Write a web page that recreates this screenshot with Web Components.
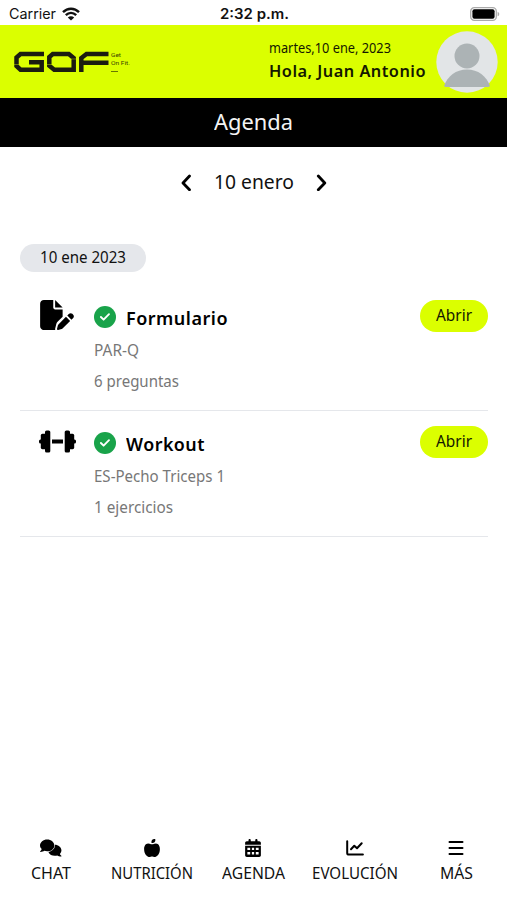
<!DOCTYPE html>
<html lang="es">
<head>
<meta charset="utf-8">
<title>Agenda</title>
<style>
body{
  margin:0;
  background:#fff;
  color:#111;
  font-family:"Noto Sans","Open Sans",sans-serif;
}
</style>
</head>
<body>
<gof-app>
  <status-bar></status-bar>
  <app-header date="martes,10 ene, 2023" name="Hola, Juan Antonio"></app-header>
  <page-title><fit-text style="width:79px">Agenda</fit-text></page-title>
  <day-picker><fit-text style="width:80px">10 enero</fit-text></day-picker>
  <date-chip><fit-text style="width:86px">10 ene 2023</fit-text></date-chip>
  <agenda-item icon="file">
    <fit-text slot="title" style="width:102px">Formulario</fit-text>
    <fit-text slot="name" style="width:45px">PAR-Q</fit-text>
    <fit-text slot="count" style="width:85px">6 preguntas</fit-text>
  </agenda-item>
  <agenda-item icon="dumbbell">
    <fit-text slot="title" style="width:79px">Workout</fit-text>
    <fit-text slot="name" style="width:131px">ES-Pecho Triceps 1</fit-text>
    <fit-text slot="count" style="width:79px">1 ejercicios</fit-text>
  </agenda-item>
  <tab-bar slot="footer">
    <tab-item icon="chat"><fit-text style="width:40px">CHAT</fit-text></tab-item>
    <tab-item icon="apple"><fit-text style="width:82px">NUTRICIÓN</fit-text></tab-item>
    <tab-item icon="calendar"><fit-text style="width:63px">AGENDA</fit-text></tab-item>
    <tab-item icon="chart"><fit-text style="width:86px">EVOLUCIÓN</fit-text></tab-item>
    <tab-item icon="bars"><fit-text style="width:33px">MÁS</fit-text></tab-item>
  </tab-bar>
</gof-app>

<script>
const icons = {
  wifi: `<svg width="18" height="14" viewBox="0 0 18 14" fill="none" stroke="#111" stroke-width="2.4">
    <path d="M1 5.2C5.6.6 12.4.6 17 5.2M3.8 8.2c3.1-3 7.3-3 10.4 0"/><path d="M9 13.6 5.8 10.4c1.8-1.6 4.6-1.6 6.4 0z" fill="#111" stroke="none"/></svg>`,
  battery: `<svg width="30" height="14" viewBox="0 0 30 14">
    <rect x=".7" y=".7" width="25.6" height="12.6" rx="3.6" fill="#fff" stroke="#aaa" stroke-width="1.3"/>
    <rect x="2.4" y="2.3" width="22.2" height="9.4" rx="2" fill="#000"/><path d="M27.6 4.7c2.2.8 2.2 3.8 0 4.6z" fill="#aaa"/></svg>`,
  logo: `<svg width="95" height="22" viewBox="0 0 95 22" fill="none" stroke="#1b1c10" stroke-width="4.5">
    <path d="M30 3H6.500L2.500 6.500v8.500l4 3.700h21.200v-7.500H15"/>
    <path d="M38.800 3h16l4.900 4v11.700H40.200l-4.900-4V6z"/>
    <path d="M94.500 3H72.500l-5.200 4v14M67 11.700h27.500"/>
    <path d="M0 13.500h5M33 13.500h5M57 8h5" stroke="#dbff00" stroke-width=".4"/></svg>`,
  left: `<svg width="12" height="18" viewBox="0 0 12 18" fill="none" stroke="#000" stroke-width="2.8" stroke-linecap="round" stroke-linejoin="round"><path d="M9.500 3 3 10l6.500 6.800"/></svg>`,
  right: `<svg width="12" height="18" viewBox="0 0 12 18" fill="none" stroke="#000" stroke-width="2.8" stroke-linecap="round" stroke-linejoin="round"><path d="M2.300 3 8.800 10l-6.500 6.800"/></svg>`,
  check: `<svg width="22" height="22" viewBox="0 0 22 22"><circle cx="11" cy="11" r="11" fill="#19a34a"/><path d="m6.900 11 2.700 2.700 5.400-5.500" fill="none" stroke="#fff" stroke-width="1.900" stroke-linecap="round" stroke-linejoin="round"/></svg>`,
  file: `<svg width="34" height="30" viewBox="0 0 576 512"><path d="M0 64C0 28.700 28.700 0 64 0H224V128c0 17.700 14.300 32 32 32H384V285.700l-86.800 86.800c-10.300 10.300-17.500 23.100-21 37.200l-18.700 74.900c-2.300 9.200-1.800 18.800 1.300 27.500H64c-35.300 0-64-28.700-64-64V64zM384 128H256V0L384 128zM549.800 235.700l14.400 14.400c15.600 15.600 15.600 40.900 0 56.600l-29.400 29.400-71-71 29.400-29.400c15.600-15.600 40.900-15.600 56.600 0zM311.900 417 441.100 287.800l71 71L382.900 487.900c-4.100 4.100-9.200 7-14.900 8.400l-60.100 15c-5.500 1.400-11.200-.2-15.200-4.200s-5.600-9.700-4.200-15.200l15-60.100c1.400-5.600 4.300-10.800 8.400-14.900z"/></svg>`,
  dumbbell: `<svg width="37" height="23" viewBox="0 0 37 23"><rect x="6" y="0.500" width="5.300" height="22" rx="1.600"/><rect x="1.800" y="3.800" width="7" height="15.400" rx="1.600"/><rect x="0" y="9.500" width="4" height="4" rx="1.500"/><rect x="13" y="9.500" width="11" height="4"/><rect x="25.700" y="0.500" width="5.300" height="22" rx="1.600"/><rect x="28.200" y="3.800" width="7" height="15.400" rx="1.600"/><rect x="33" y="9.500" width="4" height="4" rx="1.500"/></svg>`,
  chat: `<svg width="22" height="18" viewBox="0 0 23 18"><path d="M15.400 5.500c3.900 0 7 2.600 7 5.900 0 1.500-.6 2.800-1.600 3.800.3.900.9 1.500 1.500 2 .3.300.1.800-.3.800-1.500 0-2.900-.5-3.900-1.200-.8.300-1.700.4-2.700.4-2.900 0-5.400-1.400-6.500-3.500z"/><path d="M7.500 0C11.700 0 15 2.800 15 6.300s-3.300 6.200-7.500 6.200c-1 0-2-.2-2.900-.5-1 .7-2.400 1.200-4 1.200-.4 0-.6-.5-.3-.8.600-.6 1.200-1.400 1.500-2.300C.700 9.100 0 7.700 0 6.300 0 2.800 3.400 0 7.500 0z" stroke="#fff" stroke-width="1.200" paint-order="stroke"/></svg>`,
  apple: `<svg width="16" height="18" viewBox="0 0 448 512"><path d="M224 112c-8.800 0-16-7.200-16-16V80c0-44.200 35.800-80 80-80h16c8.800 0 16 7.200 16 16v16c0 44.200-35.800 80-80 80h-16zM0 288c0-76.300 35.700-160 112-160 27.300 0 59.700 10.300 82.700 19.300 18.800 7.300 39.900 7.300 58.700 0 22.900-8.900 55.400-19.300 82.700-19.300 76.300 0 112 83.700 112 160 0 128-80 224-160 224-16.500 0-38.100-6.600-51.500-11.300-8.100-2.800-16.900-2.800-25 0C198.100 505.400 176.500 512 160 512 80 512 0 416 0 288z"/></svg>`,
  calendar: `<svg width="16" height="18" viewBox="0 0 448 512"><path fill-rule="evenodd" d="M128 0c17.700 0 32 14.300 32 32v32h128V32c0-17.700 14.300-32 32-32s32 14.300 32 32v32h48c26.500 0 48 21.500 48 48v48H0v-48c0-26.500 21.500-48 48-48h48V32c0-17.700 14.300-32 32-32zM0 192h448v272c0 26.500-21.500 48-48 48H48c-26.500 0-48-21.500-48-48V192zm64 56v64h80v-64H64zm128 0v64h64v-64h-64zm112 0v64h80v-64h-80zM64 368v72h80v-72H64zm128 0v72h64v-72h-64zm112 0v72h80v-72h-80z"/></svg>`,
  chart: `<svg width="18" height="18" viewBox="0 0 18 18" fill="none" stroke="#000" stroke-width="2" stroke-linecap="round" stroke-linejoin="round"><path d="M1.200 2.200v11.700c0 1 .7 1.700 1.700 1.700h14M5 10.200l3.300-3.500 2.700 2.500 4.700-5"/></svg>`,
  bars: `<svg width="16" height="18" viewBox="0 0 16 18" stroke="#000" stroke-width="2" stroke-linecap="round"><path d="M1.500 3h13M1.500 9h13M1.500 15h13"/></svg>`,
};

// registers an element whose shadow root is built from the given markup
function component(tag, markup) {
  customElements.define(tag, class extends HTMLElement {
    constructor() {
      super();
      this.attachShadow({ mode: "open" });
      const template = document.createElement("template");
      template.innerHTML = typeof markup === "function" ? markup(this) : markup;
      this.shadowRoot.appendChild(template.content.cloneNode(true));
    }
  });
}

component("gof-app", `
<style>
:host{ display:flex; flex-direction:column; height:900px; overflow:hidden; }
main{ flex:1; }
</style>
<main><slot></slot></main>
<slot name="footer"></slot>`);

component("status-bar", `
<style>
:host{
  display:grid; grid-template-columns:1fr auto 1fr; align-items:center;
  height:25px; padding:2px 7px 0 9px; box-sizing:border-box;
  font-family:Inter,sans-serif; font-size:14px; line-height:22px;
}
.left{ display:flex; align-items:center; gap:6px; }
.time{ font-weight:600; }
.battery{ justify-self:end; display:flex; }
svg{ display:block; }
</style>
<div class="left"><fit-text style="width:47px">Carrier</fit-text>${icons.wifi}</div>
<fit-text class="time" style="width:69px">2:32 p.m.</fit-text>
<div class="battery">${icons.battery}</div>`);

component("app-header", (el) => `
<style>
:host{
  display:flex; align-items:center; justify-content:space-between;
  height:73px; padding:0 9px 0 14px; box-sizing:border-box; background:#dbff00;
}
.logo{ display:flex; gap:2px; align-items:flex-start; }
.logo svg{ display:block; }
.tag{ font:6px/8px Roboto,sans-serif; color:#3c4400; }
.tag fit-text{ display:block; }
.line{ width:7px; height:1px; margin-top:4px; background:#687600; }
.user{ display:flex; align-items:center; gap:10px; color:#141800; }
.date{ font-size:14px; line-height:22px; }
.name{ font-size:16.5px; font-weight:600; line-height:23px; letter-spacing:.5px; }
.text{ display:flex; flex-direction:column; margin-top:-4px; }
.user svg{ display:block; }
</style>
<div class="logo">${icons.logo}<div class="tag"><fit-text style="width:10px">Get</fit-text><fit-text style="width:19px">On Fit.</fit-text><div class="line"></div></div></div>
<div class="user">
  <div class="text">
    <fit-text class="date" style="width:122px">${el.getAttribute("date")}</fit-text>
    <fit-text class="name" style="width:157px">${el.getAttribute("name")}</fit-text>
  </div>
  <svg width="62" height="62" viewBox="0 0 62 62">
    <circle cx="31" cy="31" r="30.700" fill="#e2e5e7"/>
    <circle cx="31" cy="25" r="12.500" fill="#acb3b5"/>
    <path d="M8 55c3.500-10 12-16.500 23-16.500S50.500 45 54 55l-1.500 1h-43z" fill="#acb3b5"/>
  </svg>
</div>`);

component("page-title", `
<style>
:host{ display:flex; justify-content:center; height:49px; background:#000; color:#f4f4f4; font-size:21.5px; line-height:47px; }
</style>
<slot></slot>`);

component("day-picker", `
<style>
:host{ display:flex; align-items:center; justify-content:center; gap:22px; height:70px; font-size:20px; line-height:28px; }
svg{ display:block; }
</style>
${icons.left}<slot></slot>${icons.right}`);

component("date-chip", `
<style>
:host{ display:flex; justify-content:center; width:126px; height:28px; margin:27px 0 0 20px; border-radius:14px; background:#e5e7eb; font-size:15.5px; line-height:26px; }
</style>
<slot></slot>`);

component("agenda-item", (el) => `
<style>
:host{
  display:grid; grid-template-columns:74px 1fr auto; height:126px; box-sizing:border-box;
  margin:0 19px 0 20px; padding-top:15px; border-bottom:1px solid #e5e7eb;
}
:host(:first-of-type){ margin-top:13px; }
.icon{ display:flex; align-items:center; justify-content:center; width:36px; height:30px; margin:0 0 0 19px; }
.icon svg{ flex:none; }
.title{ display:flex; align-items:center; gap:10px; height:33px; font-size:18px; font-weight:600; line-height:24px; letter-spacing:.5px; color:#000; }
.title slot::slotted(*){ margin-top:3px; }
.title svg{ display:block; }
.row{ display:flex; height:31px; font-size:16px; line-height:35px; color:#777; }
button{ display:flex; justify-content:center; width:68px; height:32px; border:0; border-radius:16px; padding:0; background:#dbff00; color:#141800; font:15.500px/30px "Noto Sans",sans-serif; }
</style>
<div class="icon">${icons[el.getAttribute("icon")]}</div>
<div>
  <div class="title">${icons.check}<slot name="title"></slot></div>
  <div class="row"><slot name="name"></slot></div>
  <div class="row"><slot name="count"></slot></div>
</div>
<button><fit-text style="width:36px">Abrir</fit-text></button>`);

component("tab-bar", `
<style>
:host{ display:grid; grid-template-columns:repeat(5,1fr); height:61px; }
</style>
<slot></slot>`);

component("tab-item", (el) => `
<style>
:host{ display:flex; flex-direction:column; align-items:center; gap:4px; font-size:15.5px; line-height:24px; }
svg{ display:block; }
</style>
${icons[el.getAttribute("icon")]}<slot></slot>`);

// squeezes its text horizontally to the width of the host
class FitText extends HTMLElement {
  constructor() {
    super();
    this.attachShadow({ mode: "open" });
    this.shadowRoot.innerHTML = `
<style>
:host{ display:block; flex:none; text-align:left; }
span{ display:inline-block; white-space:nowrap; transform-origin:0 50%; vertical-align:top; }
</style>
<span><slot></slot></span>`;
  }
  connectedCallback() {
    const span = this.shadowRoot.querySelector("span");
    const width = parseFloat(this.style.width);
    span.style.transform = `scaleX(${width / span.getBoundingClientRect().width})`;
  }
}
customElements.define("fit-text", FitText);
</script>
</body>
</html>
